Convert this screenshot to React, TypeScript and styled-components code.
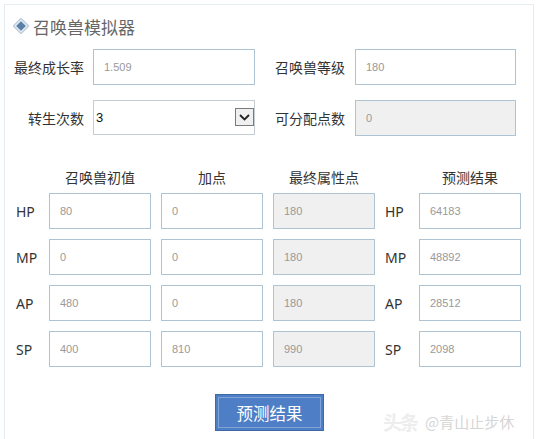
import React from 'react';
import styled, { createGlobalStyle } from 'styled-components';

const GlobalStyle = createGlobalStyle`
  body {
    margin: 0;
    background: #fff;
    font-family: "Noto Sans", "Noto Sans CJK SC", sans-serif;
  }
`;

const Panel = styled.div`
  position: relative;
  box-sizing: border-box;
  width: 530px;
  height: 437px;
  margin: 4px 0 0 4px;
  padding-top: 9px;
  border: 1px solid #e6edf1;
  overflow: hidden;
`;

const Title = styled.div`
  display: flex;
  align-items: center;
  gap: 4px;
  height: 24px;
  padding-left: 8px;
  color: #666;
  font-size: 17px;
`;

const FormGrid = styled.div`
  display: grid;
  grid-template-columns: 88px 162px 100px 161px;
  grid-auto-rows: 36px;
  row-gap: 15px;
  margin-top: 11px;
`;

const FieldLabel = styled.label<{ $side?: boolean }>`
  display: flex;
  align-items: center;
  justify-content: ${({ $side }) => ($side ? 'flex-start' : 'flex-end')};
  padding: ${({ $side }) => ($side ? '0 0 0 20px' : '0 9px 0 0')};
  color: #333;
  font-size: 14px;
  white-space: nowrap;
`;

const Input = styled.input<{ $disabled?: boolean }>`
  box-sizing: border-box;
  width: 100%;
  height: 36px;
  margin: 0;
  padding: 0 0 0 10px;
  border: 1px solid #aec4d3;
  background: ${({ $disabled }) => ($disabled ? '#f0f0f0' : '#fff')};
  color: #999;
  font-family: "Liberation Sans", Arial, sans-serif;
  font-size: 11px;
  outline: none;
`;

const SelectWrap = styled.div`
  position: relative;
  height: 35px;
`;

const Select = styled.select`
  appearance: none;
  box-sizing: border-box;
  width: 100%;
  height: 100%;
  margin: 0;
  padding: 0 0 0 2px;
  border: 1px solid #c5cdd3;
  background: #fff;
  color: #111;
  font-family: "Liberation Sans", Arial, sans-serif;
  font-size: 13px;
  outline: none;
`;

const ArrowBox = styled.span`
  position: absolute;
  top: 8px;
  right: 1px;
  box-sizing: border-box;
  width: 19px;
  height: 18px;
  border: 1px solid #7a7a7a;
  background: #f0f0f0;
  display: flex;
  align-items: center;
  justify-content: center;
  pointer-events: none;
`;

const Table = styled.div`
  display: grid;
  grid-template-columns: 34px 102px 102px 102px 24px 102px;
  grid-template-rows: 15px repeat(4, 36px);
  column-gap: 10px;
  row-gap: 10px;
  margin-top: 32px;
`;

const HeadCell = styled.div<{ $col: number }>`
  grid-column: ${({ $col }) => $col};
  align-self: start;
  height: 20px;
  line-height: 20px;
  text-align: center;
  color: #333;
  font-size: 14px;
  white-space: nowrap;
`;

const RowLabel = styled.div<{ $pad?: number }>`
  display: flex;
  align-items: center;
  padding-left: ${({ $pad }) => $pad ?? 0}px;
  color: #333;
  font-size: 14px;
`;

const ButtonRow = styled.div`
  display: flex;
  justify-content: center;
  margin-top: 27px;
  padding-left: 1px;
`;

const PredictButton = styled.button`
  width: 109px;
  height: 37px;
  border: 1px solid #3f6aa9;
  background: #4d7ec6;
  box-shadow: inset 0 0 0 2px #4d7ec6, inset 0 0 0 3px rgba(255, 255, 255, 0.3);
  color: #fff;
  font-family: "Noto Sans CJK SC", sans-serif;
  font-size: 16.5px;
  cursor: pointer;
`;

const Watermark = styled.div`
  position: absolute;
  left: 378px;
  top: 403px;
  display: flex;
  align-items: center;
  gap: 8px;
  color: #d6d6d6;
  font-family: "Noto Sans CJK SC", sans-serif;
  font-size: 15px;
  white-space: nowrap;
  pointer-events: none;
`;

const WatermarkLogo = styled.span`
  font-size: 19px;
  font-weight: bold;
  color: #ededed;
  letter-spacing: -2px;
`;

const Diamond = () => (
  <svg width="16" height="16" viewBox="0 0 16 16">
    <rect x="2.5" y="2.5" width="11" height="11" transform="rotate(45 8 8)" fill="#dfe7ee" stroke="#b7c7d5" />
    <rect x="4.6" y="4.6" width="6.8" height="6.8" transform="rotate(45 8 8)" fill="#5a80a6" />
  </svg>
);

const Chevron = () => (
  <svg width="11" height="7" viewBox="0 0 11 7">
    <path d="M1 1 L5.5 5.5 L10 1" fill="none" stroke="#222" strokeWidth="1.8" />
  </svg>
);

interface StatRow {
  name: string;
  base: string;
  added: string;
  final: string;
  result: string;
}

const rows: StatRow[] = [
  { name: 'HP', base: '80', added: '0', final: '180', result: '64183' },
  { name: 'MP', base: '0', added: '0', final: '180', result: '48892' },
  { name: 'AP', base: '480', added: '0', final: '180', result: '28512' },
  { name: 'SP', base: '400', added: '810', final: '990', result: '2098' },
];

export default function App() {
  return (
    <>
      <GlobalStyle />
      <Panel>
        <Title>
          <Diamond />
          召唤兽模拟器
        </Title>

        <FormGrid>
          <FieldLabel>最终成长率</FieldLabel>
          <Input defaultValue="1.509" />
          <FieldLabel $side>召唤兽等级</FieldLabel>
          <Input defaultValue="180" />

          <FieldLabel>转生次数</FieldLabel>
          <SelectWrap>
            <Select defaultValue="3">
              <option value="0">0</option>
              <option value="1">1</option>
              <option value="2">2</option>
              <option value="3">3</option>
            </Select>
            <ArrowBox>
              <Chevron />
            </ArrowBox>
          </SelectWrap>
          <FieldLabel $side>可分配点数</FieldLabel>
          <Input $disabled readOnly defaultValue="0" />
        </FormGrid>

        <Table>
          <HeadCell $col={2}>召唤兽初值</HeadCell>
          <HeadCell $col={3}>加点</HeadCell>
          <HeadCell $col={4}>最终属性点</HeadCell>
          <HeadCell $col={6}>预测结果</HeadCell>
          {rows.map((r) => (
            <React.Fragment key={r.name}>
              <RowLabel $pad={11}>{r.name}</RowLabel>
              <Input defaultValue={r.base} />
              <Input defaultValue={r.added} />
              <Input $disabled readOnly defaultValue={r.final} />
              <RowLabel>{r.name}</RowLabel>
              <Input defaultValue={r.result} />
            </React.Fragment>
          ))}
        </Table>

        <ButtonRow>
          <PredictButton>预测结果</PredictButton>
        </ButtonRow>

        <Watermark>
          <WatermarkLogo>头条</WatermarkLogo>
          <span>@青山止步休</span>
        </Watermark>
      </Panel>
    </>
  );
}
